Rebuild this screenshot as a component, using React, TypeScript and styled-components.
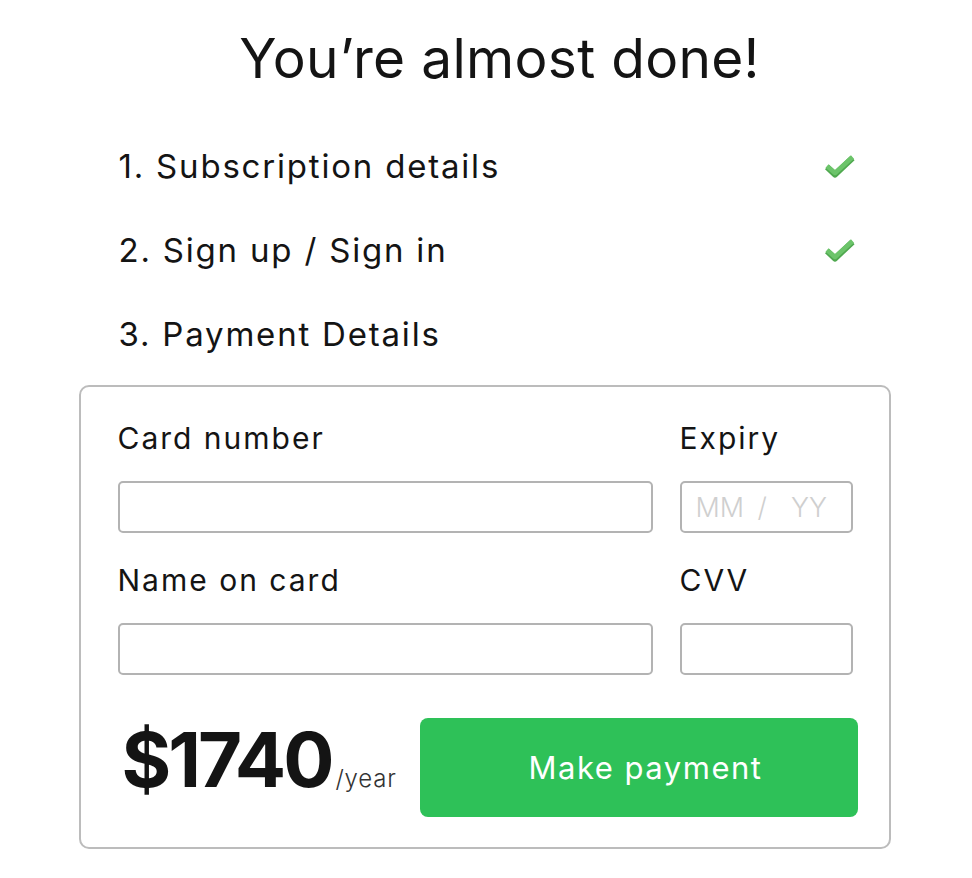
import React from 'react';
import styled, { createGlobalStyle } from 'styled-components';

const Global = createGlobalStyle`
  body {
    margin: 0;
    background: #fff;
    font-family: Inter, Lato, "Open Sans", sans-serif;
    color: #141414;
  }
`;

const Page = styled.div`
  width: 812px;
  padding-right: 3px;
  margin: 0 auto;
  padding-top: 25px;
`;

const Title = styled.h1`
  margin: 0 0 32px;
  font-size: 55px;
  line-height: 67px;
  font-weight: 400;
  letter-spacing: 0.3px;
  text-align: center;
  padding-left: 30px;
`;

const Steps = styled.ol`
  list-style: none;
  margin: 0 36px 9px 40px;
  padding: 0;
`;

const Step = styled.li`
  display: flex;
  align-items: center;
  justify-content: space-between;
  height: 84px;
  font-size: 33px;
  letter-spacing: 1.8px;
`;

const Card = styled.form`
  border: 2px solid #bcbcbc;
  border-radius: 10px;
  padding: 33px 36px 30px 37px;
`;

const Fields = styled.div`
  display: grid;
  grid-template-columns: 1fr 173px;
  column-gap: 27px;
`;

const Field = styled.label`
  display: flex;
  flex-direction: column;
  margin-bottom: ${p => (p.$last ? '43px' : '29px')};
`;

const Label = styled.span`
  font-size: 30px;
  line-height: 36px;
  letter-spacing: 2px;
  margin-bottom: 25px;
`;

const Input = styled.input`
  box-sizing: border-box;
  height: 52px;
  width: 100%;
  border: 2px solid #b3b3b3;
  border-radius: 5px;
  font: inherit;
  font-size: 26px;
  padding: 0 14px;
  outline: none;
`;

const ExpiryBox = styled.div`
  box-sizing: border-box;
  height: 52px;
  border: 2px solid #b3b3b3;
  border-radius: 5px;
  display: flex;
  align-items: center;
  padding: 0 0 0 14px;
  color: #cfcfcf;
  font-size: 27px;
  font-weight: 300;
`;

const ExpiryPart = styled.input`
  width: 46px;
  border: none;
  outline: none;
  padding: 0;
  font: inherit;
  color: #141414;
  background: transparent;

  &::placeholder {
    color: #cfcfcf;
  }
`;

const Slash = styled.span`
  margin: 0 24px 0 16px;
`;

const Footer = styled.div`
  display: flex;
  align-items: center;
  justify-content: space-between;
`;

const Price = styled.div`
  display: flex;
  align-items: baseline;
  padding-left: 4px;
  margin-bottom: 18px;
`;

const Amount = styled.span`
  font-size: 76px;
  line-height: 1;
  font-weight: 700;
  letter-spacing: -3px;
`;

const Per = styled.span`
  font-size: 24px;
  font-weight: 300;
  letter-spacing: 0.8px;
  color: #333;
  margin-left: 4px;
`;

const PayButton = styled.button`
  width: 438px;
  height: 99px;
  margin-right: -5px;
  padding: 0 0 0 14px;
  border: none;
  border-radius: 8px;
  background: #2ec158;
  color: #fff;
  font: inherit;
  font-size: 31px;
  letter-spacing: 1.5px;
  cursor: pointer;
`;

const Check = () => (
  <svg width="30" height="24" viewBox="0 0 30 24">
    <path d="M2 13 L10 20.5 L27.5 4" fill="none" stroke="#4fa84f" strokeWidth="6" strokeLinejoin="round" />
    <path d="M2 12 L10 19 L27.5 3" fill="none" stroke="#6cc46a" strokeWidth="4.5" strokeLinejoin="round" />
  </svg>
);

const steps = [
  { label: '1. Subscription details', done: true },
  { label: '2. Sign up / Sign in', done: true },
  { label: '3. Payment Details', done: false },
];

export default function App() {
  return (
    <Page>
      <Global />
      <Title>You’re almost done!</Title>
      <Steps>
        {steps.map(s => (
          <Step key={s.label}>
            <span>{s.label}</span>
            {s.done && <Check />}
          </Step>
        ))}
      </Steps>
      <Card onSubmit={e => e.preventDefault()}>
        <Fields>
          <Field>
            <Label>Card number</Label>
            <Input type="text" />
          </Field>
          <Field>
            <Label>Expiry</Label>
            <ExpiryBox>
              <ExpiryPart placeholder="MM" />
              <Slash>/</Slash>
              <ExpiryPart placeholder="YY" />
            </ExpiryBox>
          </Field>
          <Field $last>
            <Label>Name on card</Label>
            <Input type="text" />
          </Field>
          <Field $last>
            <Label>CVV</Label>
            <Input type="text" />
          </Field>
        </Fields>
        <Footer>
          <Price>
            <Amount>$1740</Amount>
            <Per>/year</Per>
          </Price>
          <PayButton type="submit">Make payment</PayButton>
        </Footer>
      </Card>
    </Page>
  );
}
